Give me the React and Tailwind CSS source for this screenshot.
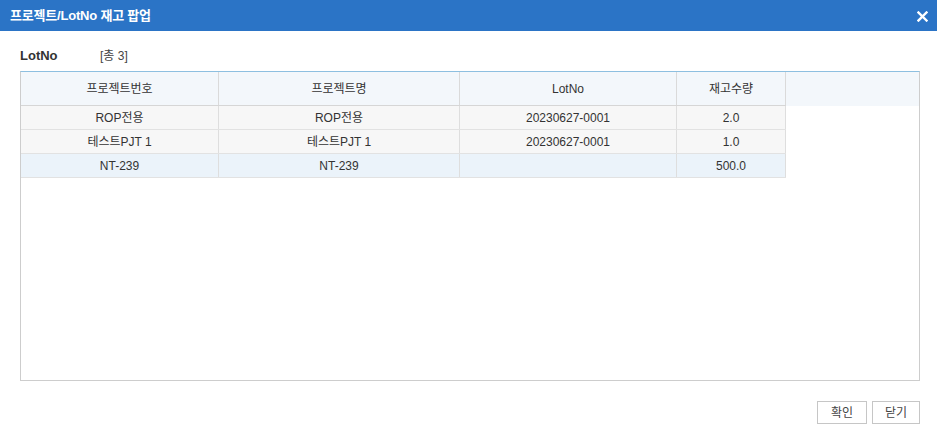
import React from 'react';

const rows = [
  { no: 'ROP전용', name: 'ROP전용', lot: '20230627-0001', qty: '2.0' },
  { no: '테스트PJT 1', name: '테스트PJT 1', lot: '20230627-0001', qty: '1.0' },
  { no: 'NT-239', name: 'NT-239', lot: '', qty: '500.0', selected: true },
];

const font = { fontFamily: '"Liberation Sans", "Noto Sans CJK KR", sans-serif' };

export default function App() {
  return (
    <div className="w-[937px] h-[437px] bg-white flex flex-col text-[#333]" style={font}>
      {/* title bar */}
      <div className="h-[31px] bg-[#2b74c6] flex items-center justify-between pl-[10px] pr-[9px]">
        <span className="text-white text-[13px] font-bold tracking-[-0.2px]">프로젝트/LotNo 재고 팝업</span>
        <svg width="11" height="11" viewBox="0 0 11 11" className="mt-[2px]">
          <path d="M1.5 1.5 L9.5 9.5 M9.5 1.5 L1.5 9.5" stroke="white" strokeWidth="2.4" strokeLinecap="square" />
        </svg>
      </div>

      <div className="flex-1 flex flex-col pl-[20px] pr-[17px]">
        <div className="flex items-center h-[24px] mt-[13px] mb-[3px]">
          <span className="w-[80px] text-[13px] font-bold text-[#333]">LotNo</span>
          <span className="text-[12px] text-[#444]">[총 3]</span>
        </div>

        {/* grid */}
        <div className="h-[310px] border border-[#cdcdcd] border-t-[#8dbfe0] flex flex-col">
          <div className="h-[34px] bg-[#f3f7fb] flex shrink-0">
            <div className="flex text-[12px] text-[#333] border-b border-[#d6d6d6]">
              <div className="w-[198px] border-r border-[#dadada] flex items-center justify-center">프로젝트번호</div>
              <div className="w-[241px] border-r border-[#dadada] flex items-center justify-center">프로젝트명</div>
              <div className="w-[217px] border-r border-[#dadada] flex items-center justify-center">LotNo</div>
              <div className="w-[109px] border-r border-[#dadada] flex items-center justify-center">재고수량</div>
            </div>
            <div className="flex-1 bg-[#f3f7fb]" />
          </div>
          <div className="flex flex-col w-[765px]">
            {rows.map((r, i) => (
              <div
                key={i}
                className={`flex h-[24px] border-b border-[#e2e2e2] text-[12px] text-[#333] ${r.selected ? 'bg-[#ebf3fa]' : 'bg-[#f7f7f7]'}`}
              >
                <div className="w-[198px] border-r border-[#dedede] flex items-center justify-center">{r.no}</div>
                <div className="w-[241px] border-r border-[#dedede] flex items-center justify-center">{r.name}</div>
                <div className="w-[217px] border-r border-[#dedede] flex items-center justify-center">{r.lot}</div>
                <div className="w-[109px] border-r border-[#dedede] flex items-center justify-center">{r.qty}</div>
              </div>
            ))}
          </div>
        </div>

        <div className="flex justify-end gap-[5px] mt-[20px]">
          <button className="w-[50px] h-[23px] border border-[#c6c6c6] bg-white text-[12px] text-[#444]">확인</button>
          <button className="w-[48px] h-[23px] border border-[#c6c6c6] bg-white text-[12px] text-[#444]">닫기</button>
        </div>
      </div>
    </div>
  );
}
